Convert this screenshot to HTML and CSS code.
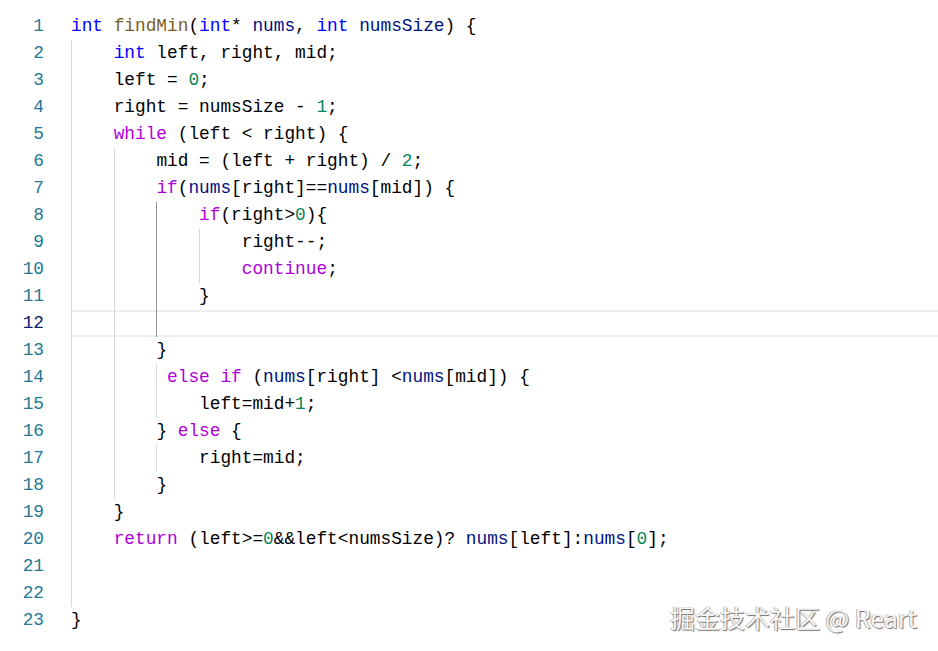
FILE: index.html
```html
<!DOCTYPE html>
<html lang="zh">
<head>
<meta charset="utf-8">
<title>findMin</title>
<link rel="stylesheet" href="styles.css">
</head>
<body>
<div class="editor">
  <div class="line"><span class="ln">1</span><span class="code"><span class="t">int</span> <span class="fn">findMin</span>(<span class="t">int</span>* <span class="p">nums</span>, <span class="t">int</span> <span class="p">numsSize</span>) {</span></div>
  <div class="line"><span class="ln">2</span><span class="code"><span class="g">    </span><span class="t">int</span> left, right, mid;</span></div>
  <div class="line"><span class="ln">3</span><span class="code"><span class="g">    </span>left = <span class="n">0</span>;</span></div>
  <div class="line"><span class="ln">4</span><span class="code"><span class="g">    </span>right = numsSize - <span class="n">1</span>;</span></div>
  <div class="line"><span class="ln">5</span><span class="code"><span class="g">    </span><span class="k">while</span> (left &lt; right) {</span></div>
  <div class="line"><span class="ln">6</span><span class="code"><span class="g">    </span><span class="g">    </span>mid = (left + right) / <span class="n">2</span>;</span></div>
  <div class="line"><span class="ln">7</span><span class="code"><span class="g">    </span><span class="g">    </span><span class="k">if</span>(<span class="p">nums</span>[right]==<span class="p">nums</span>[mid]) {</span></div>
  <div class="line"><span class="ln">8</span><span class="code"><span class="g">    </span><span class="g">    </span><span class="g active">    </span><span class="k">if</span>(right&gt;<span class="n">0</span>){</span></div>
  <div class="line"><span class="ln">9</span><span class="code"><span class="g">    </span><span class="g">    </span><span class="g active">    </span><span class="g">    </span>right--;</span></div>
  <div class="line"><span class="ln">10</span><span class="code"><span class="g">    </span><span class="g">    </span><span class="g active">    </span><span class="g">    </span><span class="k">continue</span>;</span></div>
  <div class="line"><span class="ln">11</span><span class="code"><span class="g">    </span><span class="g">    </span><span class="g active">    </span>}</span></div>
  <div class="line current"><span class="ln">12</span><span class="code"><span class="g">    </span><span class="g">    </span><span class="g active">    </span></span></div>
  <div class="line"><span class="ln">13</span><span class="code"><span class="g">    </span><span class="g">    </span>}</span></div>
  <div class="line"><span class="ln">14</span><span class="code"><span class="g">    </span><span class="g">    </span><span class="g"> </span><span class="k">else</span> <span class="k">if</span> (<span class="p">nums</span>[right] &lt;<span class="p">nums</span>[mid]) {</span></div>
  <div class="line"><span class="ln">15</span><span class="code"><span class="g">    </span><span class="g">    </span><span class="g">    </span>left=mid+<span class="n">1</span>;</span></div>
  <div class="line"><span class="ln">16</span><span class="code"><span class="g">    </span><span class="g">    </span>} <span class="k">else</span> {</span></div>
  <div class="line"><span class="ln">17</span><span class="code"><span class="g">    </span><span class="g">    </span><span class="g">    </span>right=mid;</span></div>
  <div class="line"><span class="ln">18</span><span class="code"><span class="g">    </span><span class="g">    </span>}</span></div>
  <div class="line"><span class="ln">19</span><span class="code"><span class="g">    </span>}</span></div>
  <div class="line"><span class="ln">20</span><span class="code"><span class="g">    </span><span class="k">return</span> (left&gt;=<span class="n">0</span>&amp;&amp;left&lt;numsSize)? <span class="p">nums</span>[left]:<span class="p">nums</span>[<span class="n">0</span>];</span></div>
  <div class="line"><span class="ln">21</span><span class="code"><span class="g">    </span></span></div>
  <div class="line"><span class="ln">22</span><span class="code"><span class="g">    </span></span></div>
  <div class="line"><span class="ln">23</span><span class="code">}</span></div>
</div>
<div class="watermark">掘金技术社区 @ Reart</div>
</body>
</html>
```

FILE: styles.css
```css
html, body {
  margin: 0;
  padding: 0;
  background: #ffffff;
}

body {
  width: 938px;
  height: 651px;
  overflow: hidden;
  position: relative;
}

.editor {
  padding-top: 13px;
  font-family: "Liberation Mono", "DejaVu Sans Mono", monospace;
  font-size: 17.8px;
  color: #000000;
}

.line {
  display: flex;
  height: 27px;
  line-height: 27px;
  white-space: pre;
}

.ln {
  width: 44px;
  flex: none;
  text-align: right;
  color: #237893;
}

.code {
  flex: 1;
  margin-left: 27px;
}

.current .code {
  box-shadow: inset 0 2px 0 #eeeeee, inset 0 -2px 0 #eeeeee;
}

.current .ln {
  color: #0b216f;
}

.g {
  display: inline-block;
  height: 27px;
  vertical-align: top;
  box-shadow: inset 1px 0 0 #d9d9d9;
}

.g.active {
  box-shadow: inset 1px 0 0 #939393;
}

.t { color: #0000ff; }
.fn { color: #795e26; }
.p { color: #001080; }
.k { color: #af00db; }
.n { color: #098658; }

.watermark {
  position: absolute;
  right: 21px;
  top: 601px;
  font-family: "Noto Sans CJK SC", "Noto Sans", sans-serif;
  font-size: 25px;
  line-height: 32px;
  color: #f6f6f6;
  text-shadow: 1px 1px 1px #6f6f6f, -1px 0 0 #b5b5b5;
  white-space: nowrap;
}
```
